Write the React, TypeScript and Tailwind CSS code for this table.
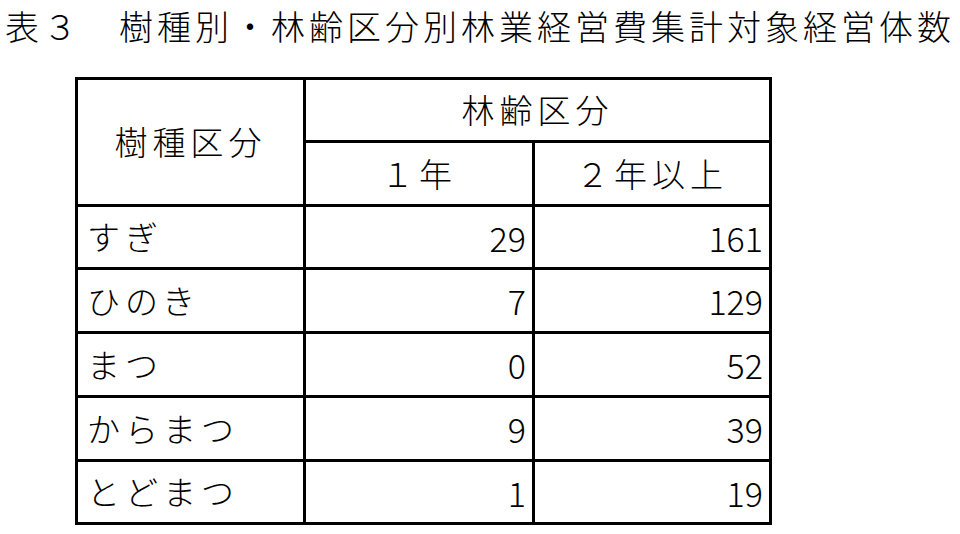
const rows = [
  { name: "すぎ", y1: "29", y2: "161" },
  { name: "ひのき", y1: "7", y2: "129" },
  { name: "まつ", y1: "0", y2: "52" },
  { name: "からまつ", y1: "9", y2: "39" },
  { name: "とどまつ", y1: "1", y2: "19" },
];

const font = { fontFamily: '"Noto Sans CJK JP", "Noto Sans", sans-serif' };

export default function App() {
  return (
    <div className="w-[960px] h-[534px] bg-white text-black overflow-hidden font-light" style={font}>
      <h1 className="pl-[5px] pt-[4px] h-[77px] text-[34px] leading-[44px] font-light tracking-[4px] whitespace-nowrap">
        表３　樹種別・林齢区分別林業経営費集計対象経営体数
      </h1>

      <div className="ml-[75px] w-[697px] grid grid-cols-[225px_226px_234px] grid-rows-[60px_61px_60px_61px_61px_61px_60px] gap-[3px] p-[3px] bg-black text-[33px] tracking-[5px]">
        <div className="row-span-2 bg-white flex items-center justify-center">樹種区分</div>
        <div className="col-span-2 bg-white flex items-center justify-center">林齢区分</div>
        <div className="bg-white flex items-center justify-center">１年</div>
        <div className="bg-white flex items-center justify-center">２年以上</div>

        {rows.map((r) => (
          <div key={r.name} className="contents">
            <div className="bg-white flex items-center pl-[9px]">{r.name}</div>
            <div className="bg-white flex items-center justify-end pr-[6px] text-[34px] tracking-normal">{r.y1}</div>
            <div className="bg-white flex items-center justify-end pr-[6px] text-[34px] tracking-normal">{r.y2}</div>
          </div>
        ))}
      </div>
    </div>
  );
}
